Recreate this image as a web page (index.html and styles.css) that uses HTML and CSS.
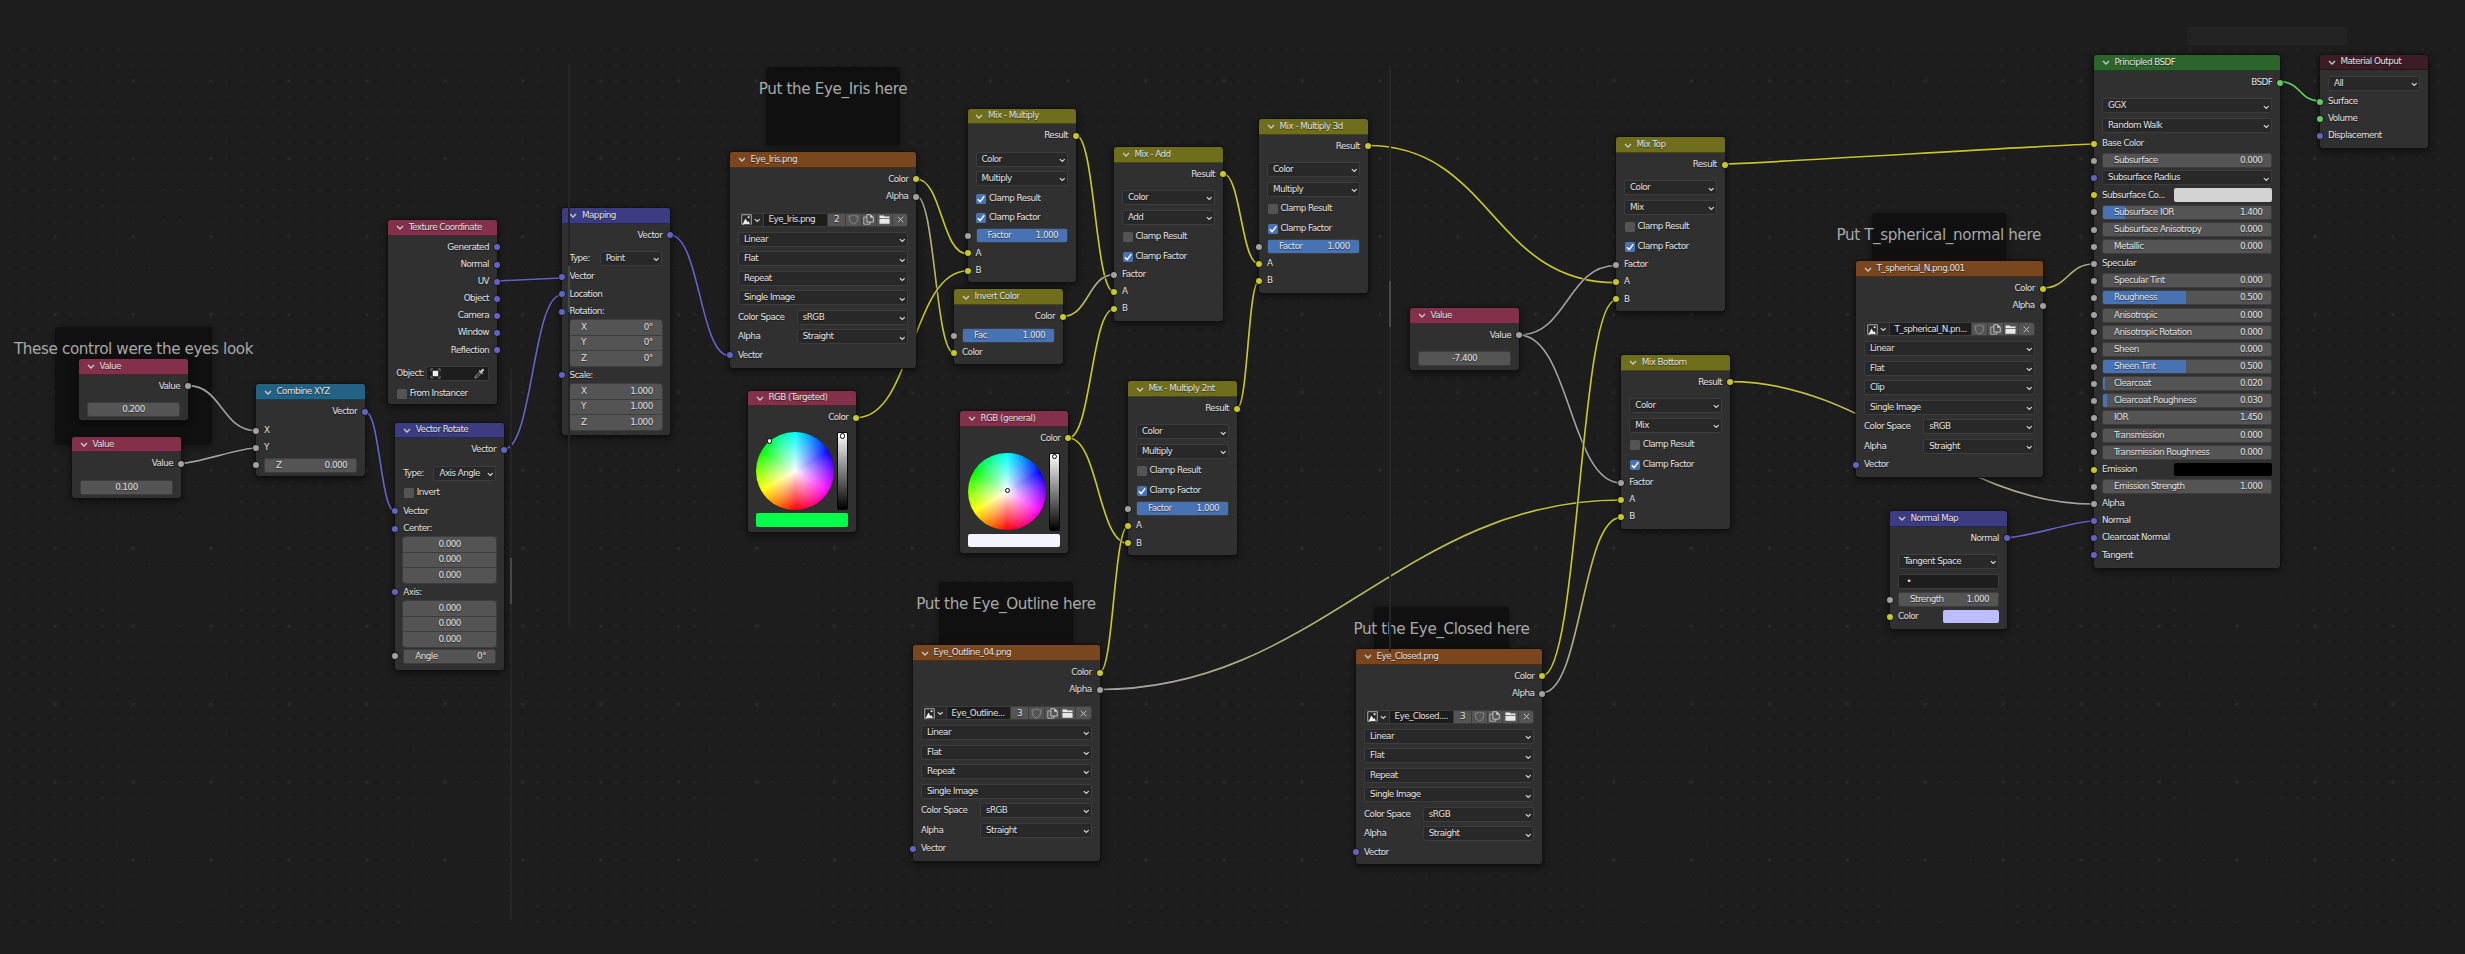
FILE: index.html
```html
<!DOCTYPE html>
<html lang="en">
<head>
<meta charset="utf-8">
<title>Shader Editor</title>
<link rel="stylesheet" href="styles.css">
</head>
<body>
<svg class="symbols" aria-hidden="true">
  <symbol id="chev" viewBox="0 0 8 5"><path d="M1 1l3 3 3-3" fill="none" stroke="currentColor" stroke-width="1.25"/></symbol>
  <symbol id="check" viewBox="0 0 10 10"><path d="M1.8 5.2l2.3 2.4 4.2-5.4" fill="none" stroke="#fff" stroke-width="1.4"/></symbol>
  <symbol id="image" viewBox="0 0 12 12"><path d="M3.5 11.2H.8V.8h10.4v10.4h-1" fill="none" stroke="#ddd" stroke-width=".8"/><path d="M1.8 11.3l3-6.300 2.600 4 1-1.500 1.300 3.800z" fill="#eee"/><rect x="7.300" y="2.500" width="2" height="2" fill="#eee"/></symbol>
  <symbol id="shield" viewBox="0 0 12 12"><path d="M6 1C4.600 2 3 2.300 1.200 2.200 1.100 6.500 2.300 9.600 6 11.200 9.700 9.600 10.900 6.500 10.800 2.200 9 2.300 7.400 2 6 1z" fill="none" stroke="#8c8c8c" stroke-width="1"/></symbol>
  <symbol id="copy" viewBox="0 0 12 12"><path d="M4.200.8h4.300l2.700 2.700v5.300h-7z" fill="none" stroke="#d8d8d8" stroke-width=".9"/><path d="M8 .8v3.200h3.200z" fill="#ddd"/><path d="M4.200 3.300H.9v7.800h6.600V8.800" fill="none" stroke="#d0d0d0" stroke-width=".8"/></symbol>
  <symbol id="folder" viewBox="0 0 12 12"><path d="M.5 1.500h4.700l1 1.200h5.300v1.600H.5zM.5 5.200h11v5.500H.5z" fill="#e8e8e8"/></symbol>
  <symbol id="close" viewBox="0 0 12 12"><path d="M3 3l6 6M9 3l-6 6" fill="none" stroke="#ccc" stroke-width="1"/></symbol>
  <symbol id="object" viewBox="0 0 12 12"><path d="M1 3.500V1h2.500M8.500 1H11v2.500M11 8.500V11H8.500M3.500 11H1V8.500" fill="none" stroke="#999" stroke-width=".8"/><rect x="3" y="3" width="6" height="6" fill="#eee"/></symbol>
  <symbol id="dropper" viewBox="0 0 12 12"><path d="M1 11l.5-2 4.500-4.500 1.500 1.500L3 10.500z" fill="none" stroke="#c8c8c8" stroke-width=".8"/><path d="M5.300 3.300l1-1 1 .9 1.600-2c1-1 2.700.6 1.800 1.700L8.900 4.700l.9 1-1 1z" fill="#c8c8c8"/></symbol>
</svg>
<main class="editor" id="editor">
  <div class="grid"></div>
</main>
<script src="nodes.js"></script>
</body>
</html>
```
FILE: styles.css
```css
* { box-sizing: border-box; }
body {
  margin: 0;
  background: #1d1d1d;
  color: #e2e2e2;
  font-family: "DejaVu Sans", sans-serif;
  font-size: 8.8px;
  letter-spacing: -.56px;
  line-height: 12px;
}
.symbols { position: absolute; width: 0; height: 0; }
.icon { display: block; flex: none; width: 11px; height: 11px; }
.chev { width: 6.5px; height: 4.500px; flex: none; display: block; }

.editor { position: relative; width: 2465px; height: 954px; overflow: hidden; }
.grid {
  position: absolute;
  inset: 45px 0 30px 0;
  background:
    radial-gradient(circle, #2b2b2b 1.300px, transparent 1.900px) 16.300px -3.200px / 77.930px 77.930px,
    radial-gradient(circle, #242424 1px, transparent 1.500px) .7px -3px / 15.586px 15.586px;
}
.frame {
  position: absolute;
  display: flex;
  justify-content: center;
  border-radius: 3px;
  background: #101010;
  box-shadow: 0 1px 5px rgba(0, 0, 0, .45);
}
.frame-title {
  padding-top: 12px;
  white-space: nowrap;
  font-size: 15.2px;
  letter-spacing: -.38px;
  line-height: 20px;
  color: #a9a9a9;
}
.links { position: absolute; inset: 0; }
.links path { fill: none; stroke-width: 1.7; }
.links .outline { stroke: #121212; stroke-width: 3; opacity: .7; }

.node {
  position: absolute;
  border-radius: 3px;
  background: #303030;
  box-shadow: 0 0 0 .7px #111, 0 2px 6px 1px rgba(0, 0, 0, .55);
  text-shadow: 0 1px 1px rgba(0, 0, 0, .55);
}
.head {
  display: flex;
  align-items: center;
  gap: 5px;
  height: 15.600px;
  padding: 0 8px 0 7.500px;
  border-radius: 3px 3px 0 0;
  border-bottom: .6px solid rgba(0, 0, 0, .35);
  white-space: nowrap;
}
.head .chev { width: 8px; height: 5px; margin-top: 1px; color: #ccc; }
.head span { padding-bottom: 1px; }
.red { background: #83314a; }
.blue { background: #3c3c83; }
.orange { background: #79461d; }
.olive { background: #6e6e1d; }
.teal { background: #246283; }
.green { background: #2b652b; }
.maroon { background: #3c1d26; }

.body { display: flex; flex-direction: column; padding: 3px 8px 0; }
.row { position: relative; display: flex; align-items: center; height: 19.5px; white-space: nowrap; }
.row.sock { height: 17.150px; }
.row.out { justify-content: flex-end; }
.row > .label { padding-bottom: 1px; }
.spacer { height: 5.200px; }
.spacer.small { height: 2.200px; }
.dot {
  position: absolute;
  left: -11px;
  top: 5.800px;
  width: 6px;
  height: 6px;
  border-radius: 50%;
  box-shadow: 0 0 0 .7px #151515;
}
.out .dot { left: auto; right: -11px; }
.s-gray { background: #a1a1a1; }
.s-yellow { background: #c7c729; }
.s-vec { background: #6363c7; }
.s-green { background: #63c763; }

.drop, .text {
  display: flex;
  flex: 1;
  align-items: center;
  justify-content: space-between;
  height: 15px;
  padding: 0 1.500px 0 5px;
  border: 1px solid #3d3d3d;
  border-radius: 2.500px;
  background: #282828;
}
.text { background: #1d1d1d; padding: 0 3px; }
.drop span { padding-bottom: 1px; }
.drop .chev { margin-top: 2px; }
.pair .label { flex: 1; }
.pair .drop, .pair .text { flex: none; width: 62.500px; }
.pair.wide .drop { width: 111.500px; }

.num {
  display: flex;
  flex: 1;
  align-items: center;
  justify-content: space-between;
  height: 15px;
  padding: 0 9px 0 11px;
  border: 1px solid #3d3d3d;
  border-radius: 2.500px;
  background: #545454;
}
.num span { padding-bottom: 1px; }
.num.center { justify-content: center; padding: 0; }
.stack { display: flex; flex-direction: column; gap: 1px; height: 46px; padding: .2px 0; margin-bottom: .8px; }
.stack .num { height: auto; border: 0; border-radius: 0; padding: 0 9.500px 0 11.500px; outline: 1px solid #3d3d3d; outline-offset: 0; }
.stack .num.center { padding: 0; }
.stack .num:first-child { border-radius: 2px 2px 0 0; }
.stack .num:last-child { border-radius: 0 0 2px 2px; }
.box { width: 10px; height: 10px; margin: 1px 3px 0 .5px; border-radius: 1.500px; background: #545454; }
.box.on { background: #4772b3; }
.box .icon { width: 10px; height: 10px; }
.swatch { height: 13.600px; border-radius: 2px; margin-left: auto; }

.image { height: 14.500px; margin: 2.500px 0; border: 1px solid #3d3d3d; border-radius: 2.500px; background: #282828; overflow: hidden; }
.image > * { display: flex; align-items: center; justify-content: center; height: 100%; }
.image .pick { width: 23.500px; gap: 2px; }
.image .name { flex: 1; justify-content: flex-start; padding: 0 0 1px 5px; background: #1d1d1d; border-left: 1px solid #3d3d3d; }
.image .btn { width: 15.600px; border-left: 1px solid #3d3d3d; background: #545454; }
.image .count { width: 18px; padding-bottom: 1px; }

.picker { display: flex; justify-content: space-between; padding-right: .5px; height: 78px; margin-bottom: 3px; }
.wheel {
  position: relative;
  width: 77.500px;
  height: 77.500px;
  border-radius: 50%;
  background:
    radial-gradient(circle closest-side, #fff, rgba(255, 255, 255, .62) 35%, rgba(255, 255, 255, 0) 100%),
    conic-gradient(from 180deg, #f00, #ff0, #0f0, #0ff, #00f, #f0f, #f00);
}
.bar { position: relative; width: 10.500px; height: 78px; border: 1px solid #080808; border-radius: 2px; background: linear-gradient(#fff, #000); }
.handle { position: absolute; width: 5.500px; height: 5.500px; margin: -2.750px; border: 1.200px solid #000; border-radius: 50%; background: #fff; }
.bar .handle { left: 4.300px; top: 3px; }
.picked { height: 13.500px; border-radius: 2px; }
.picker, .picked { position: relative; top: .7px; }

.seam { position: absolute; width: 2px; background: #252525; }
.seam.bright { background: #474747; }
.ghost { position: absolute; background: #222; }
```
FILE: nodes.js
```js
const icon = (id, cls = 'icon') => `<svg class="${cls}"><use href="#${id}"/></svg>`;
const dot = c => c ? `<i class="dot s-${c}"></i>` : '';
const chev = icon('chev', 'chev');

// Row builders
const out = (t, c) => `<div class="row sock out"><span class="label">${t}</span>${dot(c)}</div>`;
const inp = (t, c) => `<div class="row sock"><span class="label">${t}</span>${dot(c)}</div>`;
const gap = '<div class="spacer"></div>';
const smallGap = '<div class="spacer small"></div>';
const dropBox = t => `<div class="drop"><span>${t}</span>${chev}</div>`;
const drop = t => `<div class="row">${dropBox(t)}</div>`;
const pair = (l, t, wide) => `<div class="row pair ${wide ? 'wide' : ''}"><span class="label">${l}</span>${dropBox(t)}</div>`;
const check = (t, on) => `<div class="row"><i class="box ${on ? 'on' : ''}">${on ? icon('check') : ''}</i><span class="label">${t}</span></div>`;
const fill = f => f ? ` style="background:linear-gradient(90deg,#4772b3 ${f}%,#545454 ${f}%)"` : '';
const slider = (t, v, f, c = 'gray') => `<div class="row sock"><div class="num"${fill(f)}><span>${t}</span><span>${v}</span></div>${dot(c)}</div>`;
const single = v => `<div class="row"><div class="num center"><span>${v}</span></div></div>`;
const stack = rows => `<div class="stack">${rows.map(r => r.length > 1
  ? `<div class="num"><span>${r[0]}</span><span>${r[1]}</span></div>`
  : `<div class="num center"><span>${r[0]}</span></div>`).join('')}</div>`;
const swatch = (t, c, color, w) => `<div class="row sock"><span class="label">${t}</span><i class="swatch" style="width:${w}px;background:${color}"></i>${dot(c)}</div>`;
const imageRow = (name, n) => `<div class="row image"><div class="pick">${icon('image')}${chev}</div><div class="name">${name}</div>`
  + (n ? `<div class="btn count">${n}</div>` : '')
  + ['shield', 'copy', 'folder', 'close'].map(i => `<div class="btn">${icon(i)}</div>`).join('') + '</div>';

// Node bodies shared by several nodes
const value = v => out('Value', 'gray') + gap + single(v);
const mix = (mode, result, factorSlider) => out('Result', 'yellow') + gap + drop('Color') + drop(mode)
  + check('Clamp Result', result) + check('Clamp Factor', true)
  + (factorSlider ? slider('Factor', '1.000', 100) : inp('Factor', 'gray')) + inp('A', 'yellow') + inp('B', 'yellow');
const texture = (name, n, ext) => out('Color', 'yellow') + out('Alpha', 'gray') + gap + imageRow(name, n)
  + drop('Linear') + drop('Flat') + drop(ext) + drop('Single Image')
  + pair('Color Space', 'sRGB', true) + pair('Alpha', 'Straight', true) + inp('Vector', 'vec');
const rgb = (hx, hy, color) => out('Color', 'yellow') + gap
  + `<div class="picker"><div class="wheel"><i class="handle" style="left:${hx}px;top:${hy}px"></i></div><div class="bar"><i class="handle"></i></div></div>`
  + `<i class="picked" style="background:${color}"></i>`;
const zeros = [['0.000'], ['0.000'], ['0.000']];

// [x, y, width, height, header colour, title, body]
const nodes = [
  [79, 359, 109, 61.3, 'red', 'Value', value('0.200')],
  [72, 436.8, 109, 61.5, 'red', 'Value', value('0.100')],
  [256, 384.3, 109, 92, 'teal', 'Combine XYZ', out('Vector', 'vec') + smallGap + inp('X', 'gray') + inp('Y', 'gray') + slider('Z', '0.000')],
  [388.3, 220, 108.7, 183.7, 'red', 'Texture Coordinate',
    ['Generated', 'Normal', 'UV', 'Object', 'Camera', 'Window', 'Reflection'].map(t => out(t, 'vec')).join('') + gap
    + `<div class="row pair"><span class="label">Object:</span><div class="text">${icon('object')}${icon('dropper')}</div></div>`
    + check('From Instancer')],
  [395.3, 422.7, 108.7, 247.3, 'blue', 'Vector Rotate', out('Vector', 'vec') + gap + pair('Type:', 'Axis Angle') + check('Invert')
    + inp('Vector', 'vec') + inp('Center:', 'vec') + stack(zeros) + inp('Axis:', 'vec') + stack(zeros) + slider('Angle', '0°')],
  [561.5, 208, 108.7, 226.700, 'blue', 'Mapping', out('Vector', 'vec') + gap + pair('Type:', 'Point')
    + inp('Vector', 'vec') + inp('Location', 'vec') + inp('Rotation:', 'vec') + stack([['X', '0°'], ['Y', '0°'], ['Z', '0°']])
    + inp('Scale:', 'vec') + stack([['X', '1.000'], ['Y', '1.000'], ['Z', '1.000']])],
  [730, 152, 186.3, 215.500, 'orange', 'Eye_Iris.png', texture('Eye_Iris.png', 2, 'Repeat')],
  [748, 390.500, 108.3, 141.5, 'red', 'RGB (Targeted)', rgb(13.5, 9, '#00ff4b')],
  [960, 411, 108.3, 141.5, 'red', 'RGB (general)', rgb(39.5, 38, '#f4f4fe')],
  [967.5, 108.5, 108.5, 173.7, 'olive', 'Mix - Multiply', mix('Multiply', true, true)],
  [954, 289.300, 109, 74.500, 'olive', 'Invert Color', out('Color', 'yellow') + smallGap + slider('Fac', '1.000', 100) + inp('Color', 'yellow')],
  [1114, 147, 109, 173.7, 'olive', 'Mix - Add', mix('Add', false, false)],
  [1259, 119, 108.7, 173.7, 'olive', 'Mix - Multiply 3d', mix('Multiply', false, true)],
  [1128, 381.3, 109, 173.7, 'olive', 'Mix - Multiply 2nt', mix('Multiply', false, true)],
  [913, 645.3, 186.5, 215.500, 'orange', 'Eye_Outline_04.png', texture('Eye_Outline...', 3, 'Repeat')],
  [1356, 649, 186.3, 215, 'orange', 'Eye_Closed.png', texture('Eye_Closed....', 3, 'Repeat')],
  [1410, 308, 109, 61.8, 'red', 'Value', value('-7.400')],
  [1616, 137.3, 108.7, 173.7, 'olive', 'Mix Top', mix('Mix', false, false)],
  [1621.3, 355, 108.7, 173.7, 'olive', 'Mix Bottom', mix('Mix', false, false)],
  [1856, 261.3, 186.7, 215.3, 'orange', 'T_spherical_N.png.001', texture('T_spherical_N.pn...', 0, 'Clip')],
  [1890, 511, 117, 117.700, 'blue', 'Normal Map', out('Normal', 'vec') + gap + drop('Tangent Space')
    + '<div class="row"><div class="text">&nbsp;&nbsp;•</div></div>' + slider('Strength', '1.000') + swatch('Color', 'yellow', '#bcbcff', 56.5)],
  [2094, 55.2, 186.3, 513.3, 'green', 'Principled BSDF', out('BSDF', 'green') + gap + drop('GGX') + drop('Random Walk')
    + inp('Base Color', 'yellow') + slider('Subsurface', '0.000')
    + `<div class="row sock">${dropBox('Subsurface Radius')}${dot('vec')}</div>`
    + swatch('Subsurface Co...', 'yellow', '#d3d3d3', 98) + slider('Subsurface IOR', '1.400', 13)
    + slider('Subsurface Anisotropy', '0.000') + slider('Metallic', '0.000') + inp('Specular', 'gray')
    + slider('Specular Tint', '0.000') + slider('Roughness', '0.500', 49.300) + slider('Anisotropic', '0.000')
    + slider('Anisotropic Rotation', '0.000') + slider('Sheen', '0.000') + slider('Sheen Tint', '0.500', 49.300)
    + slider('Clearcoat', '0.020', 1.300) + slider('Clearcoat Roughness', '0.030', 2.500) + slider('IOR', '1.450')
    + slider('Transmission', '0.000') + slider('Transmission Roughness', '0.000')
    + swatch('Emission', 'yellow', '#000', 98) + slider('Emission Strength', '1.000')
    + inp('Alpha', 'gray') + inp('Normal', 'vec') + inp('Clearcoat Normal', 'vec') + inp('Tangent', 'vec')],
  [2320, 54.7, 108.3, 93.5, 'maroon', 'Material Output', drop('All') + inp('Surface', 'green') + inp('Volume', 'green') + inp('Displacement', 'vec')]
];

// [x, y, width, height, title]
const frames = [
  [55, 327, 157, 118, 'These control were the eyes look'],
  [766, 67, 134, 78, 'Put the Eye_Iris here'],
  [939, 582, 134, 78, 'Put the Eye_Outline here'],
  [1374, 607, 135, 78, 'Put the Eye_Closed here'],
  [1871.5, 213, 134.500, 78, 'Put T_spherical_normal here']
];

const G = '#a1a1a1', Y = '#c7c729', V = '#6363c7', S = '#63c763';
// [x1, y1, x2, y2, start colour, end colour]
const links = [
  [188, 385.7, 256, 430.7, G], [181, 463.3, 256, 448, G], [365, 411.3, 395.3, 511.7, V],
  [497, 281, 561.3, 278, V], [504, 449.3, 561.3, 295, V], [670, 235, 729.5, 355.7, V],
  [916.3, 179, 967, 253.7, Y], [916.3, 196, 954, 353, G, Y], [857, 417.5, 967, 271, Y],
  [1076, 135.3, 1114, 292, Y], [1063, 316.3, 1114, 274.7, Y, G], [1068.5, 438, 1114, 309, Y],
  [1068.5, 438, 1128, 543.3, Y], [1099.5, 672.3, 1128, 526.5, Y], [1237, 408.3, 1259, 281, Y],
  [1223, 173.5, 1259, 264, Y], [1367.7, 145.5, 1616, 282.7, Y], [1519, 335, 1616, 265.5, G],
  [1519, 335, 1621, 483, G], [1099.5, 689.5, 1621, 500, G, Y], [1542.5, 675.5, 1616, 300, Y],
  [1542.5, 692.7, 1621, 517.3, G, Y], [1724.7, 164, 2093.5, 144, Y], [1730, 381.7, 2093.5, 504, Y, G],
  [2042.7, 288, 2093.5, 264, Y, G], [2007, 537.7, 2093.5, 521, V], [2280.5, 81.7, 2319.5, 101, S]
];

// [x, y, height, bright]
const seams = [
  [568, 65, 560, ''], [568, 266, 46, 'bright'], [510, 368, 552, ''], [510, 558, 46, 'bright'],
  [1389, 65, 587, ''], [1389, 281, 46, 'bright']
];

const place = (x, y, w, h) => `style="left:${x}px;top:${y}px;width:${w}px;height:${h}px"`;
let html = frames.map(([x, y, w, h, t]) => `<div class="frame" ${place(x, y, w, h)}><span class="frame-title">${t}</span></div>`).join('');

html += '<svg class="links" width="2465" height="954">' + links.map(([a, b, c, d, from, to], i) => {
  // Shallow links are straightened by shortening their handles
  const slope = Math.abs((d - b) / (c - a));
  const h = (c - a) / 2 * Math.min(1, slope * 2.3);
  const path = `M${a} ${b}C${a + h} ${b} ${c - h} ${d} ${c} ${d}`;
  const grad = to ? `<linearGradient id="g${i}" gradientUnits="userSpaceOnUse" x1="${a}" y1="${b}" x2="${c}" y2="${d}"><stop stop-color="${from}"/><stop offset="1" stop-color="${to}"/></linearGradient>` : '';
  return `${grad}<path class="outline" d="${path}"/><path d="${path}" stroke="${to ? `url(#g${i})` : from}"/>`;
}).join('') + '</svg>';

html += nodes.map(([x, y, w, h, color, title, body]) =>
  `<section class="node" ${place(x, y, w, h)}><header class="head ${color}">${chev}<span>${title}</span></header><div class="body">${body}</div></section>`).join('');
html += seams.map(([x, y, h, b]) => `<i class="seam ${b}" style="left:${x}px;top:${y}px;height:${h}px"></i>`).join('');
html += `<i class="ghost" ${place(2187, 27, 160, 18)}></i>`;
document.getElementById('editor').insertAdjacentHTML('beforeend', html);
```
